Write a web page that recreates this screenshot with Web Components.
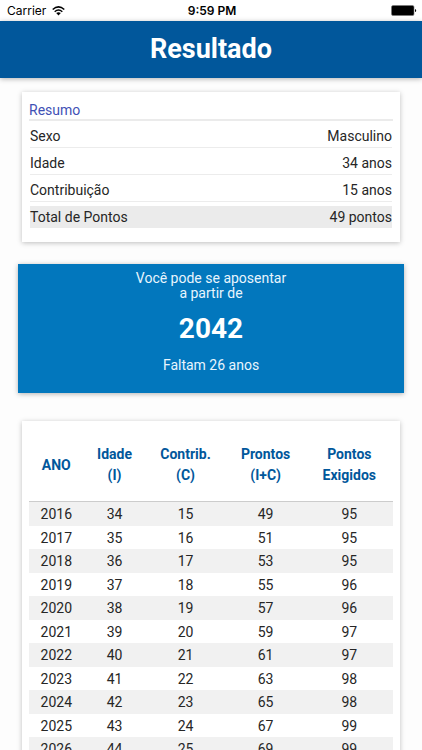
<!DOCTYPE html>
<html lang="pt-BR">
<head>
<meta charset="utf-8">
<meta name="viewport" content="width=device-width, initial-scale=1">
<title>Resultado</title>
<style>
  body { margin: 0; background: #fdfdfd; color: #262626; font: 14px/20px Roboto, "Liberation Sans", sans-serif; }
</style>
</head>
<body>
<result-app>
  <status-bar slot="status" carrier="Carrier" time="9:59 PM"></status-bar>
  <app-header slot="header">Resultado</app-header>
  <summary-card heading="Resumo">
    <summary-row label="Sexo">Masculino</summary-row>
    <summary-row label="Idade">34 anos</summary-row>
    <summary-row label="Contribuição">15 anos</summary-row>
    <summary-row label="Total de Pontos" total>49 pontos</summary-row>
  </summary-card>
  <retirement-banner year="2042">
    Você pode se aposentar<br>a partir de
    <span slot="remaining">Faltam 26 anos</span>
  </retirement-banner>
  <points-table></points-table>
</result-app>

<script>
class BaseElement extends HTMLElement {
  connectedCallback() {
    if (!this.shadowRoot) this.attachShadow({ mode: 'open' }).innerHTML = this.render();
  }
}

customElements.define('result-app', class extends BaseElement {
  render() {
    return `<style>
      :host { display: flex; flex-direction: column; height: 100vh; }
      main { flex: 1; min-height: 0; overflow-y: auto; scrollbar-width: none; padding: 14px 18px 0; }
      slot[name=header] { display: block; position: relative; z-index: 1; }
    </style>
    <slot name="status"></slot>
    <slot name="header"></slot>
    <main><slot></slot></main>`;
  }
});

customElements.define('status-bar', class extends BaseElement {
  render() {
    return `<style>
      :host { display: grid; grid-template-columns: 1fr auto 1fr; align-items: center; height: 21px;
        padding: 0 5px 0 7px; background: #fff; color: #000; font: 12px/20px Inter, sans-serif; }
      .left { display: flex; align-items: center; gap: 6px; }
      .time { font-weight: 600; }
      svg { display: block; }
      .battery { justify-self: end; }
    </style>
    <span class="left">${this.getAttribute('carrier')}
      <svg width="13" height="10" viewBox="0 0 13 10" fill="none" stroke="#000" aria-label="Wi-Fi">
        <path d="M.7 3.5Q6.5-1.8 12.3 3.5" stroke-width="1.5"/>
        <path d="M2.7 5.7Q6.5 2.3 10.3 5.7" stroke-width="1.5"/>
        <path d="M4.2 7.1Q6.5 5.3 8.8 7.1L6.5 9.6Z" fill="#000" stroke="none"/>
      </svg>
    </span>
    <span class="time">${this.getAttribute('time')}</span>
    <svg class="battery" width="26" height="11" viewBox="0 0 26 11" aria-label="Bateria">
      <rect x=".5" y=".5" width="22.5" height="10" rx="1.5" fill="#000" stroke="#777" stroke-width=".6"/>
      <path d="M24 4Q25.4 4.5 25.2 5.5Q25.4 6.5 24 7Z"/>
    </svg>`;
  }
});

customElements.define('app-header', class extends BaseElement {
  render() {
    return `<style>
      :host { display: block; background: #01579b; color: #fff; box-shadow: 0 1px 5px rgba(0,0,0,.3); }
      h1 { margin: 0; font-size: 27px; line-height: 57px; font-weight: 700; text-align: center; }
    </style><h1><slot></slot></h1>`;
  }
});

customElements.define('summary-card', class extends BaseElement {
  render() {
    return `<style>
      :host { display: block; margin: 0 4px 22px; padding: 8px 7px 14px; background: #fff;
        box-shadow: 0 1px 5px rgba(0,0,0,.25); }
      h2 { margin: 0; height: 19px; border-bottom: 2px solid #ebebeb; color: #3f51b5;
        font-size: 14px; line-height: 20px; font-weight: 400; }
      dl { margin: 0; padding: 0 1px; }
    </style>
    <h2>${this.getAttribute('heading')}</h2>
    <dl><slot></slot></dl>`;
  }
});

customElements.define('summary-row', class extends BaseElement {
  render() {
    return `<style>
      :host { display: block; }
      div { display: flex; justify-content: space-between; height: 22px; padding-top: 4px;
        border-bottom: 1px solid #ececec; line-height: 22px; }
      dd { margin: 0; }
      :host([total]) div { background: #ebebeb; border: 0; margin-top: 4px; padding: 0; }
    </style>
    <div><dt>${this.getAttribute('label')}</dt><dd><slot></slot></dd></div>`;
  }
});

customElements.define('retirement-banner', class extends BaseElement {
  render() {
    return `<style>
      :host { display: block; margin-bottom: 28px; padding: 7px 0 17px; background: #0277bd; color: #e8f5fd;
        text-align: center; line-height: 15px; box-shadow: 0 1px 5px rgba(0,0,0,.3); }
      p { margin: 0; }
      strong { display: block; margin: 10px 0 7px; color: #fff; font-size: 28px; line-height: 36px; }
      .remaining { line-height: 22px; }
    </style>
    <p><slot></slot></p>
    <strong>${this.getAttribute('year')}</strong>
    <p class="remaining"><slot name="remaining"></slot></p>`;
  }
});

customElements.define('points-table', class extends BaseElement {
  render() {
    const required = [95, 95, 95, 96, 96, 97, 97, 98, 98, 99, 99];
    const rows = required.map((points, i) =>
      `<tr><td>${2016 + i}</td><td>${34 + i}</td><td>${15 + i}</td><td>${49 + 2 * i}</td><td>${points}</td></tr>`).join('');
    return `<style>
      :host { display: block; margin: 0 4px; padding: 8px 7px; background: #fff;
        box-shadow: 0 1px 5px rgba(0,0,0,.25); }
      table { width: 100%; table-layout: fixed; border-collapse: separate; border-spacing: 0; text-align: center; }
      th, td { padding: 0; }
      th { height: 72px; border-bottom: 1px solid #ccc; color: #01579b; font-weight: 700; line-height: 21px; }
      .year { width: 15%; }
      .age { width: 17%; }
      .contribution, .points { width: 22%; }
      tbody tr { height: 23px; }
      tbody tr:nth-child(odd) { height: 24px; background: #f1f1f1; }
    </style>
    <table>
      <colgroup><col class="year"><col class="age"><col class="contribution"><col class="points"><col></colgroup>
      <thead><tr><th scope="col">ANO</th><th scope="col">Idade<br>(I)</th><th scope="col">Contrib.<br>(C)</th>
      <th scope="col">Prontos<br>(I+C)</th><th scope="col">Pontos<br>Exigidos</th></tr></thead>
      <tbody>${rows}</tbody>
    </table>`;
  }
});
</script>
</body>
</html>
